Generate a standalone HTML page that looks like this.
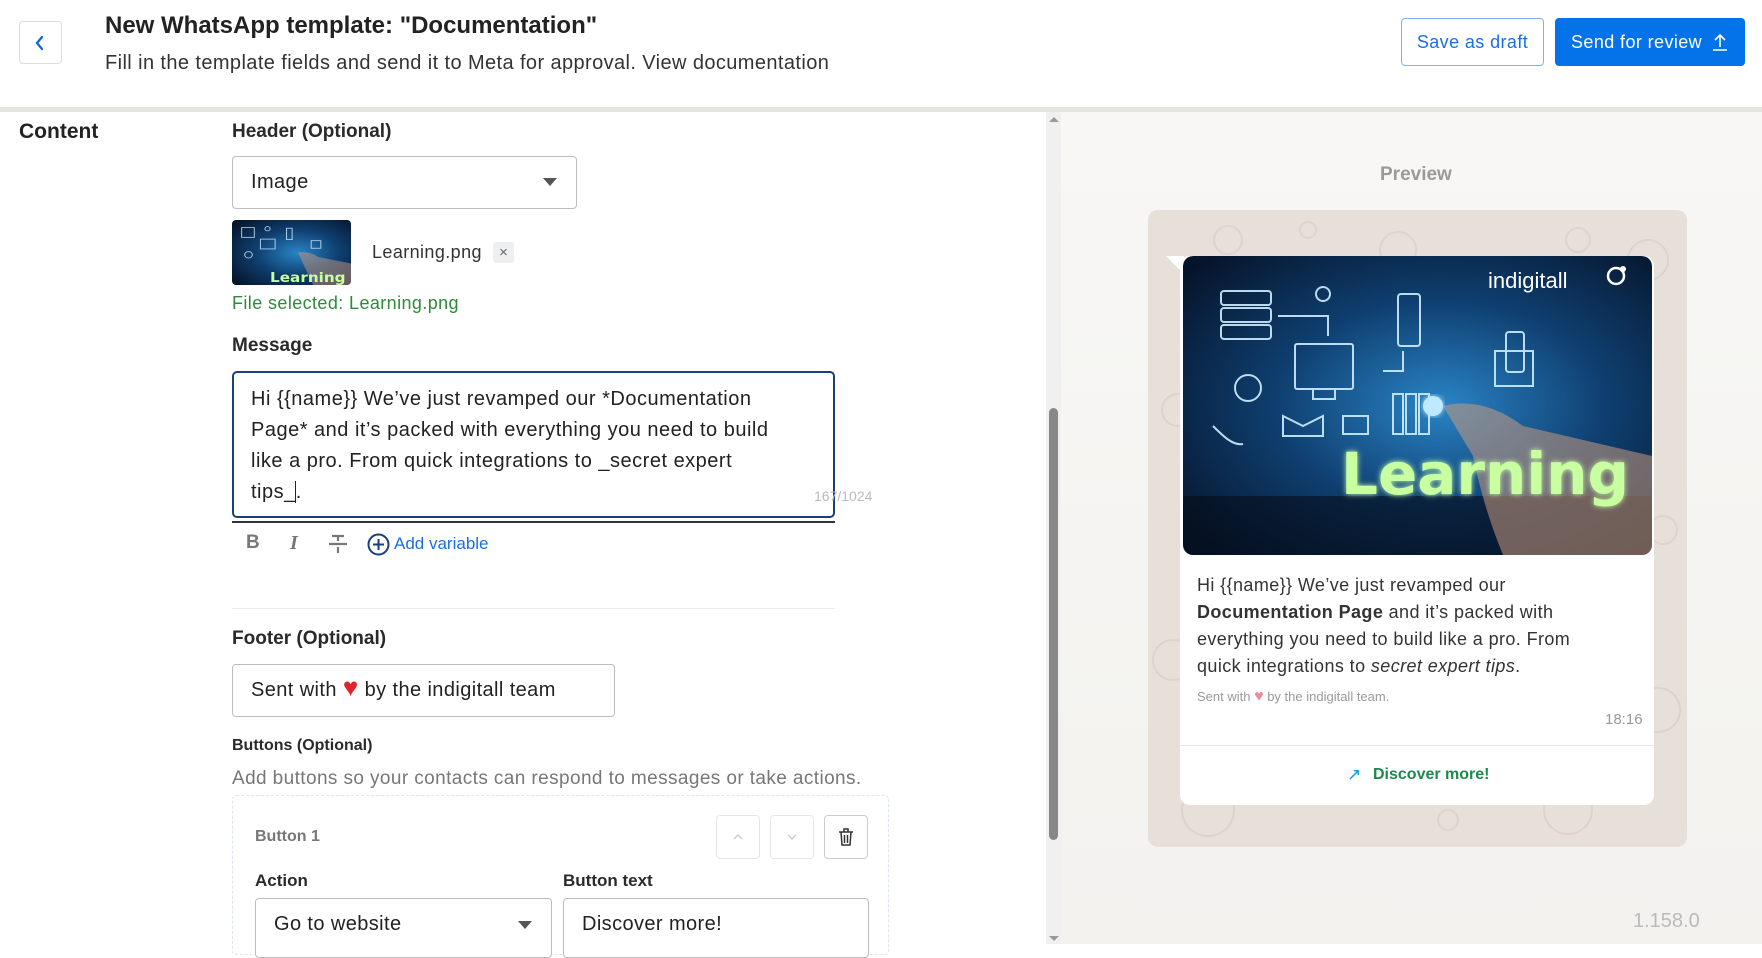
<!DOCTYPE html>
<html><head><meta charset="utf-8">
<style>
*{box-sizing:border-box;margin:0;padding:0}
body{width:1762px;height:944px;overflow:hidden;background:#fff;font-family:"Liberation Sans",sans-serif;color:#222;position:relative}
.a{position:absolute}
.lbl{font-size:19px;font-weight:bold;color:#2a2a2a}
.box{border:1px solid #bdbdbd;border-radius:4px;background:#fff}
.tri{width:0;height:0;border-left:7px solid transparent;border-right:7px solid transparent;border-top:8px solid #555}
.sq{border:1px solid #e6e6e6;border-radius:4px;width:44px;height:44px}
.w{letter-spacing:.4px}
</style></head><body>

<div class="a" style="left:19px;top:21px;width:43px;height:43px;border:1px solid #d8dde3;border-radius:4px"></div>
<svg class="a" style="left:33px;top:34px" width="14" height="18" viewBox="0 0 14 18"><path d="M9 3 L4 9 L9 15" stroke="#0b63d6" stroke-width="2.2" fill="none" stroke-linecap="round"/></svg>
<div class="a" style="left:105px;top:12px;font-size:24px;font-weight:bold;color:#222">New WhatsApp template: "Documentation"</div>
<div class="a w" style="left:105px;top:52px;font-size:20px;color:#333">Fill in the template fields and send it to Meta for approval. View documentation</div>
<div class="a w" style="left:1401px;top:18px;width:143px;height:48px;border:1px solid #7fb2ef;border-radius:4px;color:#1a6fe0;font-size:18px;line-height:46px;text-align:center">Save as draft</div>
<div class="a w" style="left:1555px;top:18px;width:190px;height:48px;background:#0473ea;border-radius:4px;color:#fff;font-size:18px;line-height:48px;padding-left:16px">Send for review</div>
<svg class="a" style="left:1711px;top:32px" width="18" height="20" viewBox="0 0 18 20"><path d="M9 15V3M4 8l5-5 5 5M2 18h14" stroke="#fff" stroke-width="1.6" fill="none"/></svg>
<div class="a" style="left:0;top:107px;width:1762px;height:5px;background:#e6e4e0"></div>

<div class="a" style="left:1061px;top:112px;width:701px;height:832px;background:linear-gradient(#f8f7f5,#f3f2ef)"></div>
<div class="a" style="left:1046px;top:112px;width:15px;height:832px;background:#f0f0f0"></div>
<div class="a" style="left:1049px;top:408px;width:9px;height:432px;background:#888;border-radius:5px"></div>
<div class="a" style="left:1049px;top:117px;width:0;height:0;border-left:5px solid transparent;border-right:5px solid transparent;border-bottom:5px solid #999"></div>
<div class="a" style="left:1049px;top:936px;width:0;height:0;border-left:5px solid transparent;border-right:5px solid transparent;border-top:5px solid #999"></div>

<div class="a" style="left:1380px;top:164px;font-size:19px;font-weight:bold;color:#9a9a9a">Preview</div>
<div class="a" style="left:1148px;top:210px;width:539px;height:637px;background:#e7e0d9;border-radius:10px;overflow:hidden">
<svg width="539" height="637" style="opacity:.35"><g fill="none" stroke="#c9bfb5" stroke-width="2">
<circle cx="80" cy="30" r="14"/><circle cx="160" cy="20" r="8"/><circle cx="250" cy="40" r="18"/><circle cx="430" cy="30" r="12"/><circle cx="500" cy="50" r="20"/>
<circle cx="30" cy="200" r="16"/><circle cx="515" cy="320" r="14"/><circle cx="25" cy="450" r="20"/><circle cx="510" cy="500" r="22"/>
<circle cx="60" cy="600" r="26"/><circle cx="300" cy="610" r="10"/><circle cx="420" cy="600" r="24"/></g></svg>
</div>
<div class="a" style="left:1166px;top:256px;width:0;height:0;border-top:18px solid #fff;border-left:18px solid transparent"></div>
<div class="a" style="left:1180px;top:256px;width:474px;height:549px;background:#fff;border-radius:10px"></div>

<svg class="a" style="left:1183px;top:256px;border-radius:10px" width="469" height="299" viewBox="0 0 469 299">
<defs><radialGradient id="g1" cx="0.55" cy="0.5" r="0.7"><stop offset="0" stop-color="#2a84c6"/><stop offset="0.5" stop-color="#0f3f70"/><stop offset="1" stop-color="#06142a"/></radialGradient>
<filter id="gl"><feGaussianBlur stdDeviation="3" result="b"/><feMerge><feMergeNode in="b"/><feMergeNode in="SourceGraphic"/></feMerge></filter></defs>
<rect width="469" height="299" rx="10" fill="url(#g1)"/>
<rect y="240" width="469" height="59" fill="#050d1a" opacity=".6"/>
<g stroke="#cfeeff" stroke-width="2" fill="none" opacity=".9">
<rect x="38" y="35" width="50" height="14" rx="3"/><rect x="38" y="52" width="50" height="14" rx="3"/><rect x="38" y="69" width="50" height="14" rx="3"/>
<rect x="112" y="88" width="58" height="45" rx="2"/><path d="M130 133v10h22v-10"/>
<rect x="215" y="38" width="22" height="52" rx="3"/><rect x="312" y="95" width="38" height="35"/><rect x="323" y="76" width="18" height="40" rx="3"/>
<circle cx="65" cy="132" r="13"/><circle cx="140" cy="38" r="7"/><path d="M200 115h20v-20M95 60h50v20"/>
<rect x="210" y="138" width="10" height="40"/><rect x="223" y="138" width="10" height="40"/><rect x="236" y="138" width="10" height="40"/>
<path d="M30 170c10 10 20 20 30 18M100 160l20 10 20-10v20h-40z"/><rect x="160" y="160" width="25" height="18"/>
</g>
<path d="M260 150 Q300 140 340 170 L469 200 L469 299 L320 299 Q300 250 290 200 Z" fill="#c89a80" opacity=".55"/>
<circle cx="250" cy="150" r="10" fill="#bfe9ff" filter="url(#gl)"/>
<text x="305" y="32" font-family="Liberation Sans,sans-serif" font-size="22" fill="#fff">indigitall</text>
<circle cx="433" cy="20" r="8" stroke="#fff" stroke-width="2.5" fill="none"/><circle cx="440" cy="13" r="3" fill="#fff"/>
<text x="158" y="238" font-family="DejaVu Sans,sans-serif" font-weight="bold" font-size="58" fill="#c8ffa0" filter="url(#gl)">Learning</text>
</svg>

<div class="a w" style="left:1197px;top:572px;width:415px;font-size:18px;line-height:27px;color:#333">Hi {{name}} We’ve just revamped our <b>Documentation Page</b> and it’s packed with everything you need to build like a pro. From quick integrations to <i>secret expert tips</i>.</div>
<div class="a" style="left:1197px;top:688px;font-size:13px;color:#999">Sent with <span style="color:#f08a9a;font-size:16px">♥</span> by the indigitall team.</div>
<div class="a" style="left:1605px;top:711px;font-size:15px;color:#999">18:16</div>
<div class="a" style="left:1180px;top:745px;width:474px;height:1px;background:#e8e8e8"></div>
<div class="a" style="left:1347px;top:765px;font-size:17px;color:#0e9be0">↗</div>
<div class="a" style="left:1373px;top:766px;font-size:16px;font-weight:bold;color:#1c8a4e">Discover more!</div>
<div class="a" style="left:1633px;top:910px;font-size:20px;color:#bbb">1.158.0</div>

<div class="a" style="left:19px;top:120px;font-size:21px;font-weight:bold;color:#222">Content</div>
<div class="a lbl" style="left:232px;top:121px">Header (Optional)</div>
<div class="a box" style="left:232px;top:156px;width:345px;height:53px"></div>
<div class="a w" style="left:251px;top:171px;font-size:20px;color:#222">Image</div>
<div class="a tri" style="left:543px;top:178px"></div>

<svg class="a" style="left:232px;top:220px;border-radius:4px" width="119" height="65" viewBox="0 0 469 299" preserveAspectRatio="none">
<rect width="469" height="299" fill="url(#g1)"/>
<g stroke="#cfeeff" stroke-width="4" fill="none" opacity=".8"><rect x="38" y="35" width="50" height="45"/><rect x="112" y="88" width="58" height="45"/><rect x="215" y="38" width="22" height="52"/><rect x="312" y="95" width="38" height="35"/><circle cx="65" cy="160" r="15"/><circle cx="140" cy="40" r="10"/></g>
<path d="M260 150 Q300 140 340 170 L469 200 L469 299 L320 299 Z" fill="#c89a80" opacity=".5"/>
<text x="150" y="285" font-family="DejaVu Sans,sans-serif" font-weight="bold" font-size="60" fill="#c8ffa0">Learning</text>
</svg>
<div class="a w" style="left:372px;top:242px;font-size:18px;color:#333">Learning.png</div>
<div class="a" style="left:493px;top:242px;width:21px;height:21px;background:#eeeff1;border-radius:3px;color:#666;font-size:15px;text-align:center;line-height:21px">×</div>
<div class="a w" style="left:232px;top:293px;font-size:18px;color:#2f8a3a">File selected: Learning.png</div>

<div class="a lbl" style="left:232px;top:335px">Message</div>
<div class="a" style="left:232px;top:371px;width:603px;height:147px;border:2px solid #1b3f7d;border-radius:5px"></div>
<div class="a" style="left:251px;top:384px;width:580px;font-size:20px;line-height:31px;color:#222;letter-spacing:.5px;white-space:nowrap">Hi {{name}} We’ve just revamped our *Documentation<br>Page* and it’s packed with everything you need to build<br>like a pro. From quick integrations to _secret expert<br>tips_<span style="border-left:1.5px solid #222;margin-left:-1px"></span>.</div>
<div class="a" style="left:814px;top:488px;font-size:14px;color:#bbb">167/1024</div>
<div class="a" style="left:232px;top:521px;width:603px;height:2px;background:#333"></div>
<div class="a" style="left:246px;top:532px;font-size:19px;font-weight:bold;color:#777">B</div>
<div class="a" style="left:290px;top:532px;font-size:20px;font-weight:bold;font-style:italic;font-family:'Liberation Serif',serif;color:#777">I</div>
<svg class="a" style="left:327px;top:533px" width="22" height="22" viewBox="0 0 22 22"><path d="M5 3h12M11 3v5M2 11h18M11 14v6" stroke="#777" stroke-width="2.2" fill="none"/></svg>
<svg class="a" style="left:367px;top:533px" width="23" height="23" viewBox="0 0 23 23"><circle cx="11.5" cy="11.5" r="10" stroke="#1b3f7d" stroke-width="2" fill="none"/><path d="M11.5 6v11M6 11.5h11" stroke="#1b3f7d" stroke-width="2"/></svg>
<div class="a" style="left:394px;top:534px;font-size:17px;color:#1a6fe0">Add variable</div>
<div class="a" style="left:232px;top:608px;width:603px;height:1px;background:#ececec"></div>

<div class="a lbl" style="left:232px;top:628px">Footer (Optional)</div>
<div class="a box" style="left:232px;top:664px;width:383px;height:53px"></div>
<div class="a w" style="left:251px;top:677px;font-size:20px;color:#222">Sent with <span style="color:#e0242f;font-size:26px;line-height:20px">♥</span> by the indigitall team</div>
<div class="a" style="left:232px;top:737px;font-size:16px;font-weight:bold;color:#2a2a2a">Buttons (Optional)</div>
<div class="a w" style="left:232px;top:768px;font-size:19px;color:#777">Add buttons so your contacts can respond to messages or take actions.</div>
<div class="a" style="left:232px;top:795px;width:657px;height:160px;border:1px dashed #dde6f0;border-radius:4px"></div>
<div class="a" style="left:255px;top:828px;font-size:16px;font-weight:bold;color:#777">Button 1</div>
<div class="a sq" style="left:716px;top:815px"></div>
<div class="a sq" style="left:770px;top:815px"></div>
<div class="a sq" style="left:824px;top:815px;border-color:#ccc"></div>
<svg class="a" style="left:730px;top:830px" width="16" height="14"><path d="M4 9l4-4 4 4" stroke="#ccc" stroke-width="1.4" fill="none"/></svg>
<svg class="a" style="left:784px;top:830px" width="16" height="14"><path d="M4 5l4 4 4-4" stroke="#ccc" stroke-width="1.4" fill="none"/></svg>
<svg class="a" style="left:836px;top:826px" width="20" height="22" viewBox="0 0 20 22"><path d="M3 6h14M8 6V3h4v3M5 6l1 13h8l1-13M8.5 9v8M11.5 9v8" stroke="#333" stroke-width="1.5" fill="none"/></svg>
<div class="a" style="left:255px;top:871px;font-size:17px;font-weight:bold;color:#2a2a2a">Action</div>
<div class="a" style="left:563px;top:871px;font-size:17px;font-weight:bold;color:#2a2a2a">Button text</div>
<div class="a box" style="left:255px;top:898px;width:297px;height:60px"></div>
<div class="a w" style="left:274px;top:913px;font-size:20px;color:#222">Go to website</div>
<div class="a tri" style="left:518px;top:921px"></div>
<div class="a box" style="left:563px;top:898px;width:306px;height:60px"></div>
<div class="a w" style="left:582px;top:913px;font-size:20px;color:#222">Discover more!</div>
</body></html>
